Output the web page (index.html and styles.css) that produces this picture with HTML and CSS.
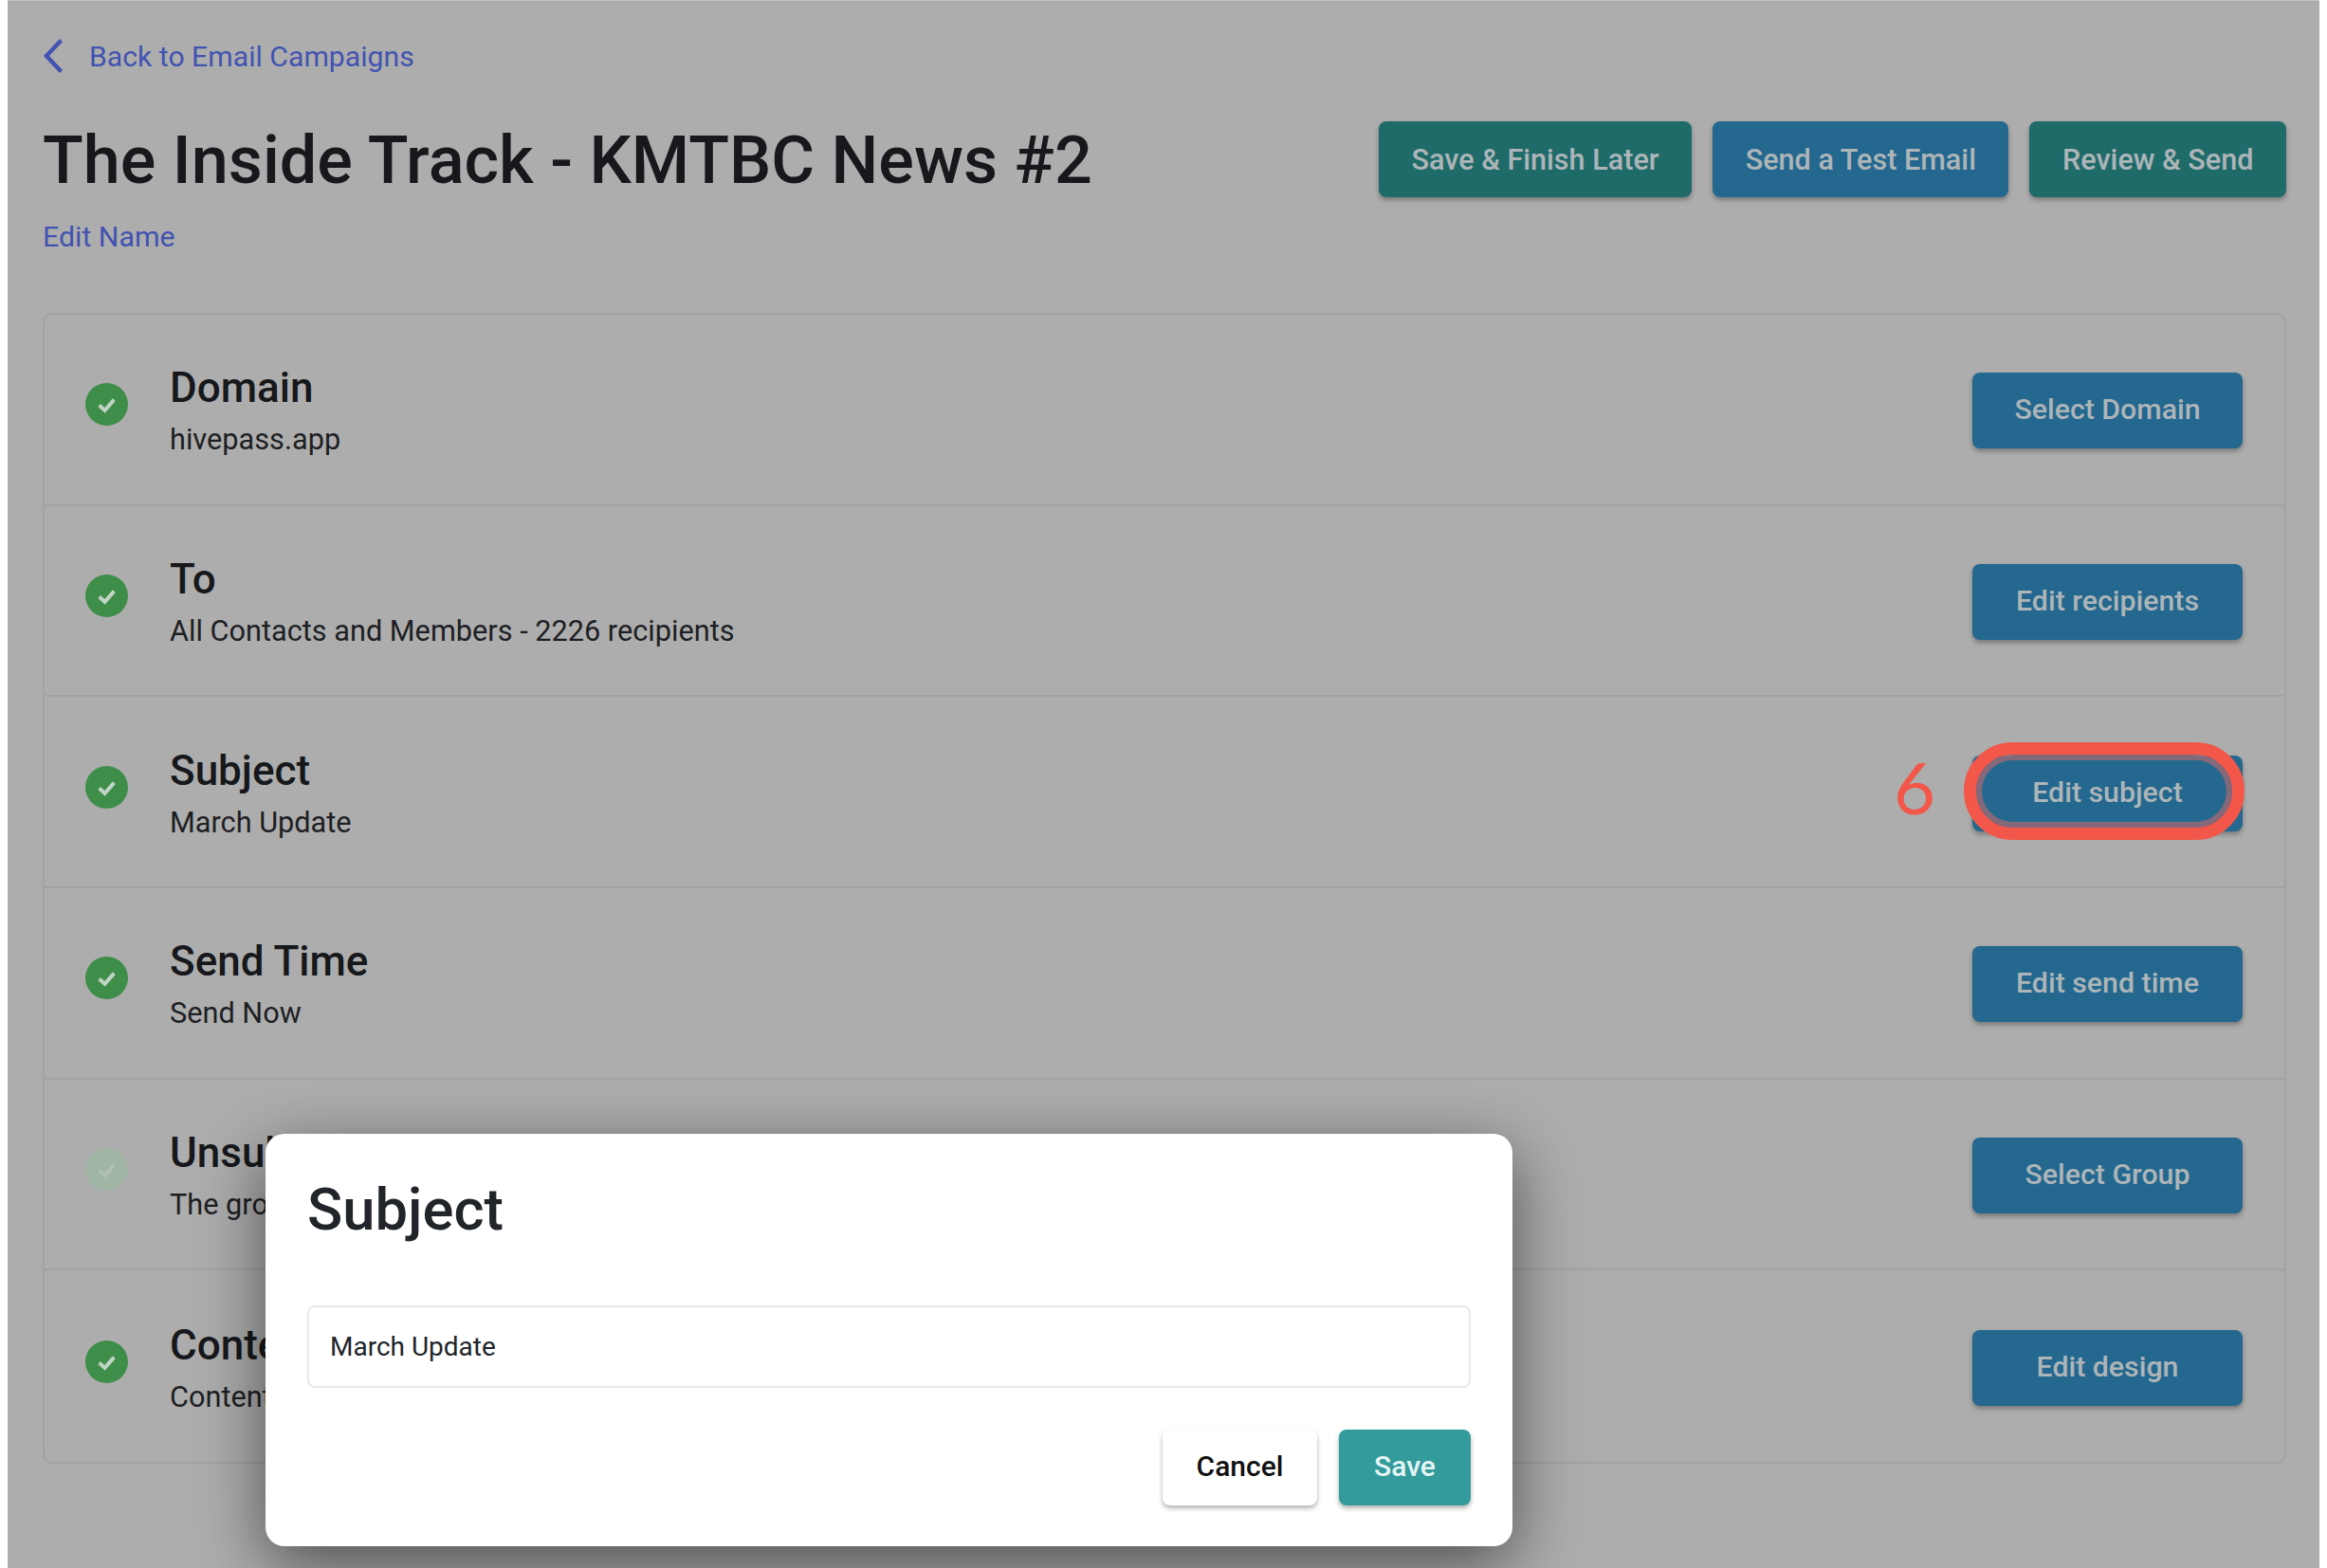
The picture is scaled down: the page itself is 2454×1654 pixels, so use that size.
FILE: index.html
```html
<!DOCTYPE html>
<html lang="en">
<head>
    <meta charset="UTF-8">
    <title>The Inside Track - KMTBC News #2</title>
    <link rel="stylesheet" href="styles.css">
</head>
<body>
    <div class="page">
        <a class="back-link" href="#">
            <svg class="chevron" viewBox="0 0 22 38"><path d="M19 2.5 L3.5 19 L19 35.5"/></svg>
            <span>Back to Email Campaigns</span>
        </a>

        <header class="head">
            <div>
                <h1>The Inside Track - KMTBC News #2</h1>
                <a class="edit-name" href="#">Edit Name</a>
            </div>
            <div class="head-actions">
                <button class="btn teal">Save &amp; Finish Later</button>
                <button class="btn blue">Send a Test Email</button>
                <button class="btn teal">Review &amp; Send</button>
            </div>
        </header>

        <!-- Checklist -->
        <div class="card">
            <div class="row">
                <svg class="check" viewBox="0 0 46 46"><circle cx="23" cy="23" r="23"/><path d="M15 24 L21 29.5 L31 18"/></svg>
                <div class="row-text">
                    <h3>Domain</h3>
                    <p>hivepass.app</p>
                </div>
                <button class="btn blue wide">Select Domain</button>
            </div>
            <div class="row">
                <svg class="check" viewBox="0 0 46 46"><circle cx="23" cy="23" r="23"/><path d="M15 24 L21 29.5 L31 18"/></svg>
                <div class="row-text">
                    <h3>To</h3>
                    <p>All Contacts and Members - 2226 recipients</p>
                </div>
                <button class="btn blue wide">Edit recipients</button>
            </div>
            <div class="row">
                <svg class="check" viewBox="0 0 46 46"><circle cx="23" cy="23" r="23"/><path d="M15 24 L21 29.5 L31 18"/></svg>
                <div class="row-text">
                    <h3>Subject</h3>
                    <p>March Update</p>
                </div>
                <div class="marked">
                    <span class="mark-number">6</span>
                    <span class="mark-ring"></span>
                    <button class="btn blue wide">Edit subject</button>
                </div>
            </div>
            <div class="row">
                <svg class="check" viewBox="0 0 46 46"><circle cx="23" cy="23" r="23"/><path d="M15 24 L21 29.5 L31 18"/></svg>
                <div class="row-text">
                    <h3>Send Time</h3>
                    <p>Send Now</p>
                </div>
                <button class="btn blue wide">Edit send time</button>
            </div>
            <div class="row">
                <svg class="check faded" viewBox="0 0 46 46"><circle cx="23" cy="23" r="23"/><path d="M15 24 L21 29.5 L31 18"/></svg>
                <div class="row-text">
                    <h3>Unsub</h3>
                    <p>The group</p>
                </div>
                <button class="btn blue wide">Select Group</button>
            </div>
            <div class="row">
                <svg class="check" viewBox="0 0 46 46"><circle cx="23" cy="23" r="23"/><path d="M15 24 L21 29.5 L31 18"/></svg>
                <div class="row-text">
                    <h3>Content</h3>
                    <p>Content</p>
                </div>
                <button class="btn blue wide">Edit design</button>
            </div>
        </div>

        <!-- Subject dialog -->
        <div class="modal">
            <h2>Subject</h2>
            <input class="modal-input" type="text" value="March Update">
            <div class="modal-actions">
                <button class="btn plain">Cancel</button>
                <button class="btn save">Save</button>
            </div>
        </div>
    </div>
</body>
</html>
```

FILE: styles.css
```css
* {
    margin: 0;
    padding: 0;
    box-sizing: border-box;
    font-family: Roboto, "Liberation Sans", sans-serif;
}

body {
    background: #fff;
    overflow: hidden;
}

.page {
    position: relative;
    height: 1654px;
    margin: 0 8px;
    padding: 38px 35px 0 37px;
    background: #adadad;
    border-top: 1px solid #c4c4c4;
}

a {
    color: #4253b1;
    text-decoration: none;
}

.back-link {
    display: flex;
    align-items: center;
    gap: 26px;
    height: 40px;
    font-size: 30.2px;
}

.chevron {
    width: 23px;
    height: 38px;
    fill: none;
    stroke: #4253b1;
    stroke-width: 4.5;
}

.head {
    display: flex;
    justify-content: space-between;
    margin-top: 49px;
}

h1 {
    font-size: 70.2px;
    font-weight: 500;
    line-height: 82px;
    color: #16181b;
}

.edit-name {
    display: block;
    margin-top: 22px;
    font-size: 30.3px;
    line-height: 36px;
}

.head-actions {
    display: flex;
    gap: 22px;
}

.btn {
    height: 80px;
    padding: 0 34.5px;
    border: none;
    border-radius: 8px;
    font-size: 30.6px;
    font-weight: 500;
    color: #adb5b8;
    box-shadow: 0 3px 5px rgba(0, 0, 0, 0.3);
}

.teal {
    background: #1f6b6a;
}

.blue {
    background: #24688f;
}

.wide {
    width: 285px;
    padding: 0 0 3px;
    font-size: 30.3px;
}

.card {
    margin-top: 62px;
    border: 2px solid #a2a2a2;
    border-radius: 10px;
}

.row {
    display: flex;
    align-items: center;
    height: 201.7px;
    padding: 3px 44px 0 43px;
    border-bottom: 2px solid #a2a2a2;
}

.row:last-child {
    border-bottom: none;
}

.check {
    flex: none;
    width: 45px;
    height: 45px;
    margin: -13px 44px 0 0;
    fill: #3e8e4a;
}

.check path {
    fill: none;
    stroke: #c2d4c5;
    stroke-width: 4;
}

.check.faded {
    fill: #a1b5a5;
}

.check.faded path {
    stroke: #b0c0b3;
}

.row-text {
    flex: 1;
}

h3 {
    font-size: 44px;
    font-weight: 500;
    line-height: 50px;
    color: #16181b;
}

.row-text p {
    margin-top: 12px;
    font-size: 30.7px;
    line-height: 36px;
    color: #1d2023;
}

.marked {
    position: relative;
}

.mark-ring {
    position: absolute;
    top: -14px;
    left: -9px;
    right: -2px;
    bottom: -9px;
    z-index: 1;
    border: 13px solid #f2574a;
    border-radius: 52px;
    box-shadow: inset 0 0 0 6px #83697a;
}

.mark-number {
    position: absolute;
    top: -11px;
    left: -83px;
    font-family: Lato, sans-serif;
    font-size: 76px;
    font-weight: 400;
    line-height: 88px;
    color: #f2574a;
}

.modal {
    position: absolute;
    top: 1195px;
    left: 272px;
    width: 1315px;
    height: 435px;
    padding: 46px 44px 0;
    background: #fff;
    border-radius: 20px;
    box-shadow: 0 20px 70px rgba(0, 0, 0, 0.55);
}

h2 {
    font-size: 61.5px;
    font-weight: 500;
    line-height: 68px;
    color: #212529;
}

.modal-input {
    display: block;
    width: 100%;
    height: 87px;
    margin-top: 67px;
    padding: 0 22px;
    border: 2px solid #e9e9e9;
    border-radius: 8px;
    font-size: 28px;
    color: #212529;
    outline: none;
}

.modal-actions {
    display: flex;
    justify-content: flex-end;
    gap: 23px;
    margin-top: 44px;
}

.plain {
    width: 163px;
    padding: 0 0 3px;
    font-size: 30px;
    background: #fff;
    color: #111;
}

.save {
    width: 139px;
    padding: 0 0 3px;
    font-size: 30px;
    background: #339b9b;
    color: #e6f5f5;
}
```
